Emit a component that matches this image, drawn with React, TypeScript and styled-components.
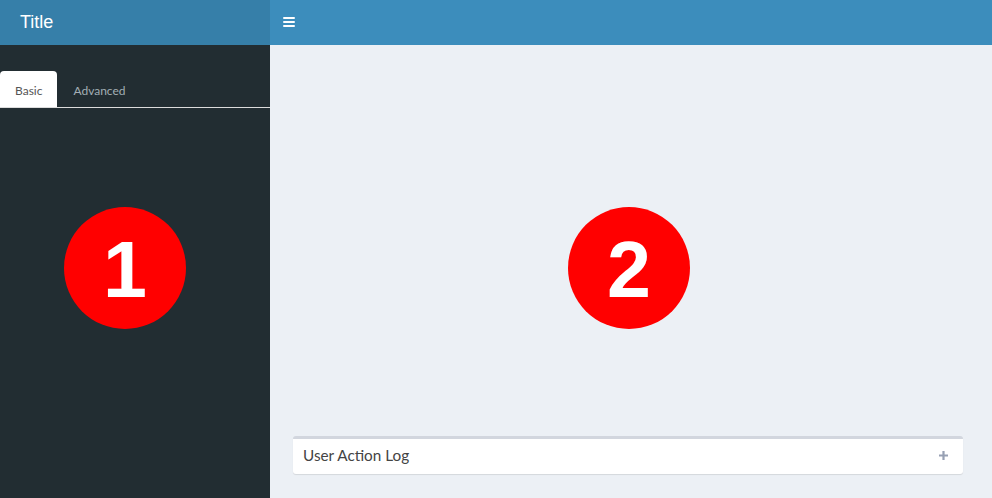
import React from 'react';
import styled, {createGlobalStyle} from 'styled-components';

const GlobalStyle = createGlobalStyle`
  html, body {
    margin: 0;
    padding: 0;
    height: 100%;
    overflow: hidden;
  }
  body {
    font-family: "Liberation Sans", Arial, sans-serif;
    background: #ecf0f5;
  }
  #root {
    height: 100%;
  }
`;

const Page = styled.div`
  display: grid;
  grid-template-columns: 270px 1fr;
  grid-template-rows: 45px 1fr;
  width: 992px;
  height: 498px;
`;

const Logo = styled.div`
  background: #367fa9;
  color: #fff;
  font-size: 18px;
  font-weight: 300;
  display: flex;
  align-items: center;
  padding-left: 20px;
  padding-bottom: 1px;
`;

const Navbar = styled.div`
  background: #3c8dbc;
  display: flex;
  align-items: center;
  padding-left: 13px;
`;

const Burger = styled.button`
  border: 0;
  background: transparent;
  padding: 0;
  width: 12px;
  height: 10px;
  display: flex;
  flex-direction: column;
  justify-content: space-between;
  margin-top: -1px;

  span {
    display: block;
    height: 2px;
    background: #fff;
    border-radius: 1px;
  }
`;

const Sidebar = styled.aside`
  position: relative;
  background: #222d32;
  padding-top: 26px;
`;

const TabList = styled.div`
  display: flex;
  border-bottom: 1px solid #dcdcdc;
  font-family: Lato, "Open Sans", sans-serif;
  font-size: 12px;
`;

const Tab = styled.div<{$active?: boolean}>`
  height: 36px;
  display: flex;
  align-items: center;
  padding: 2px 15px 0 15px;
  margin-right: 1px;
  border-radius: 4px 4px 0 0;
  background: ${({$active}) => ($active ? '#fff' : 'transparent')};
  color: ${({$active}) => ($active ? '#555' : '#a3afb5')};
  box-sizing: border-box;
`;

const Content = styled.main`
  position: relative;
  display: flex;
  flex-direction: column;
  justify-content: flex-end;
  padding: 0 29px 24px 23px;
`;

const Box = styled.section`
  background: #fff;
  border-top: 3px solid #d2d6de;
  border-radius: 3px;
  box-shadow: 0 1px 1px rgba(0, 0, 0, 0.1);
  height: 38px;
  box-sizing: border-box;
  display: flex;
  align-items: center;
  justify-content: space-between;
  padding: 0 15px 3px 10px;
`;

const BoxTitle = styled.h3`
  margin: 0;
  font-family: Lato, "Open Sans", sans-serif;
  font-size: 15.3px;
  font-weight: 400;
  color: #444;
`;

const PlusIcon = styled.svg`
  display: block;
  width: 9px;
  height: 9px;
  color: #97a0b3;
  margin-top: 1px;
`;

const Marker = styled.div<{$left: number}>`
  position: absolute;
  top: 162px;
  left: ${({$left}) => $left}px;
  width: 122px;
  height: 122px;
  border-radius: 50%;
  background: #ff0000;
  color: #fff;
  font-family: "Liberation Sans", Arial, sans-serif;
  font-weight: 700;
  font-size: 79px;
  display: flex;
  align-items: center;
  justify-content: center;
  line-height: 1;
  padding-top: 2px;
  box-sizing: border-box;
`;

export default function App() {
  return (
    <>
      <GlobalStyle />
      <Page>
        <Logo>Title</Logo>
        <Navbar>
          <Burger aria-label="Toggle navigation">
            <span />
            <span />
            <span />
          </Burger>
        </Navbar>
        <Sidebar>
          <TabList>
            <Tab $active>Basic</Tab>
            <Tab>Advanced</Tab>
          </TabList>
          <Marker $left={64}>1</Marker>
        </Sidebar>
        <Content>
          <Box>
            <BoxTitle>User Action Log</BoxTitle>
            <PlusIcon viewBox="0 0 9 9" aria-label="Expand">
              <path d="M4.5 0v9M0 4.5h9" stroke="currentColor" strokeWidth="2.2" />
            </PlusIcon>
          </Box>
          <Marker $left={298}>2</Marker>
        </Content>
      </Page>
    </>
  );
}
